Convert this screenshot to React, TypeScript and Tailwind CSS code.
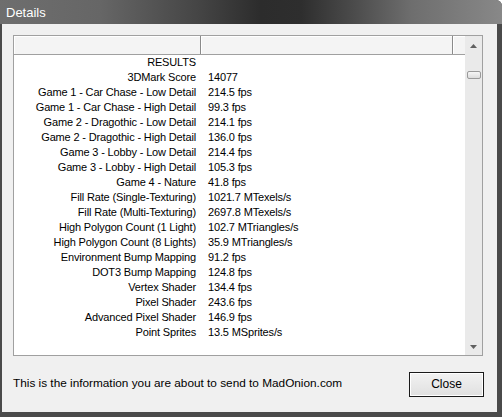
import React from 'react';

const rows: [string, string][] = [
  ['RESULTS', ''],
  ['3DMark Score', '14077'],
  ['Game 1 - Car Chase - Low Detail', '214.5 fps'],
  ['Game 1 - Car Chase - High Detail', '99.3 fps'],
  ['Game 2 - Dragothic - Low Detail', '214.1 fps'],
  ['Game 2 - Dragothic - High Detail', '136.0 fps'],
  ['Game 3 - Lobby - Low Detail', '214.4 fps'],
  ['Game 3 - Lobby - High Detail', '105.3 fps'],
  ['Game 4 - Nature', '41.8 fps'],
  ['Fill Rate (Single-Texturing)', '1021.7 MTexels/s'],
  ['Fill Rate (Multi-Texturing)', '2697.8 MTexels/s'],
  ['High Polygon Count (1 Light)', '102.7 MTriangles/s'],
  ['High Polygon Count (8 Lights)', '35.9 MTriangles/s'],
  ['Environment Bump Mapping', '91.2 fps'],
  ['DOT3 Bump Mapping', '124.8 fps'],
  ['Vertex Shader', '134.4 fps'],
  ['Pixel Shader', '243.6 fps'],
  ['Advanced Pixel Shader', '146.9 fps'],
  ['Point Sprites', '13.5 MSprites/s'],
];

const Arrow = ({ up }: { up?: boolean }) => (
  <svg width="7" height="4" viewBox="0 0 7 4">
    <path d={up ? 'M0 4 L3.5 0 L7 4 Z' : 'M0 0 L3.5 4 L7 0 Z'} fill="#606060" />
  </svg>
);

const App = () => (
  <div
    className="w-[502px] h-[417px] flex flex-col bg-[#4a4a4a] overflow-hidden rounded-tr-[6px]"
    style={{ fontFamily: '"Liberation Sans", Arial, sans-serif' }}
  >
    {/* Title bar */}
    <div className="h-[24px] flex items-center pl-[6px] bg-[linear-gradient(90deg,#6e6e6e_0%,#666_20%,#444_40%,#2c2c2c_52%,#2e2e2e_60%,#4a4a4a_70%,#6e6e6e_82%,#888_100%)]">
      <span className="text-white text-[13px] leading-none">Details</span>
    </div>

    {/* Body */}
    <div className="flex-1 ml-[2px] mr-[5px] mb-[5px] bg-[#f0f0f0] flex flex-col pl-[11px] pr-[14px] pt-[11px] text-[11px] text-black">
      <div className="h-[321px] border border-[#a0a0a0] bg-white flex">
        <div className="flex-1 flex flex-col">
          {/* Header */}
          <div className="h-[19px] flex border-b border-[#a0a0a0] bg-[#f4f4f4]">
            <div className="w-[187px] border-r border-[#8a8a8a] shadow-[inset_1px_1px_0_#fff]" />
            <div className="flex-1 border-r border-[#8a8a8a] shadow-[inset_1px_1px_0_#fff]" />
            <div className="w-[12px] shadow-[inset_1px_1px_0_#fff]" />
          </div>
          {/* Rows */}
          <div className="flex flex-col tracking-[-0.15px]">
            {rows.map(([label, value]) => (
              <div key={label} className="h-[15px] flex items-center leading-none">
                <div className="w-[187px] text-right pr-[5px] whitespace-nowrap">{label}</div>
                <div className="pl-[7px] whitespace-nowrap">{value}</div>
              </div>
            ))}
          </div>
        </div>
        {/* Scrollbar */}
        <div className="w-[17px] bg-[#eaeaea] flex flex-col items-center">
          <div className="h-[17px] flex items-center justify-center mt-[1px]">
            <Arrow up />
          </div>
          <div className="mt-[17px] w-[14px] h-[8px] rounded-[2px] border border-[#9a9a9a] bg-[linear-gradient(#f6f6f6,#dcdcdc)]" />
          <div className="flex-1" />
          <div className="h-[17px] flex items-center justify-center">
            <Arrow />
          </div>
        </div>
      </div>

      {/* Footer */}
      <div className="flex-1 flex items-center justify-between">
        <span className="whitespace-nowrap text-[11.8px]">This is the information you are about to send to MadOnion.com</span>
        <button className="w-[75px] h-[25px] mr-[-1px] border border-[#1a1a1a] bg-[linear-gradient(#f2f2f2,#e0e0e0)] shadow-[inset_0_0_0_1px_#fff] text-[12px] flex items-center justify-center">
          Close
        </button>
      </div>
    </div>
  </div>
);

export default App;
